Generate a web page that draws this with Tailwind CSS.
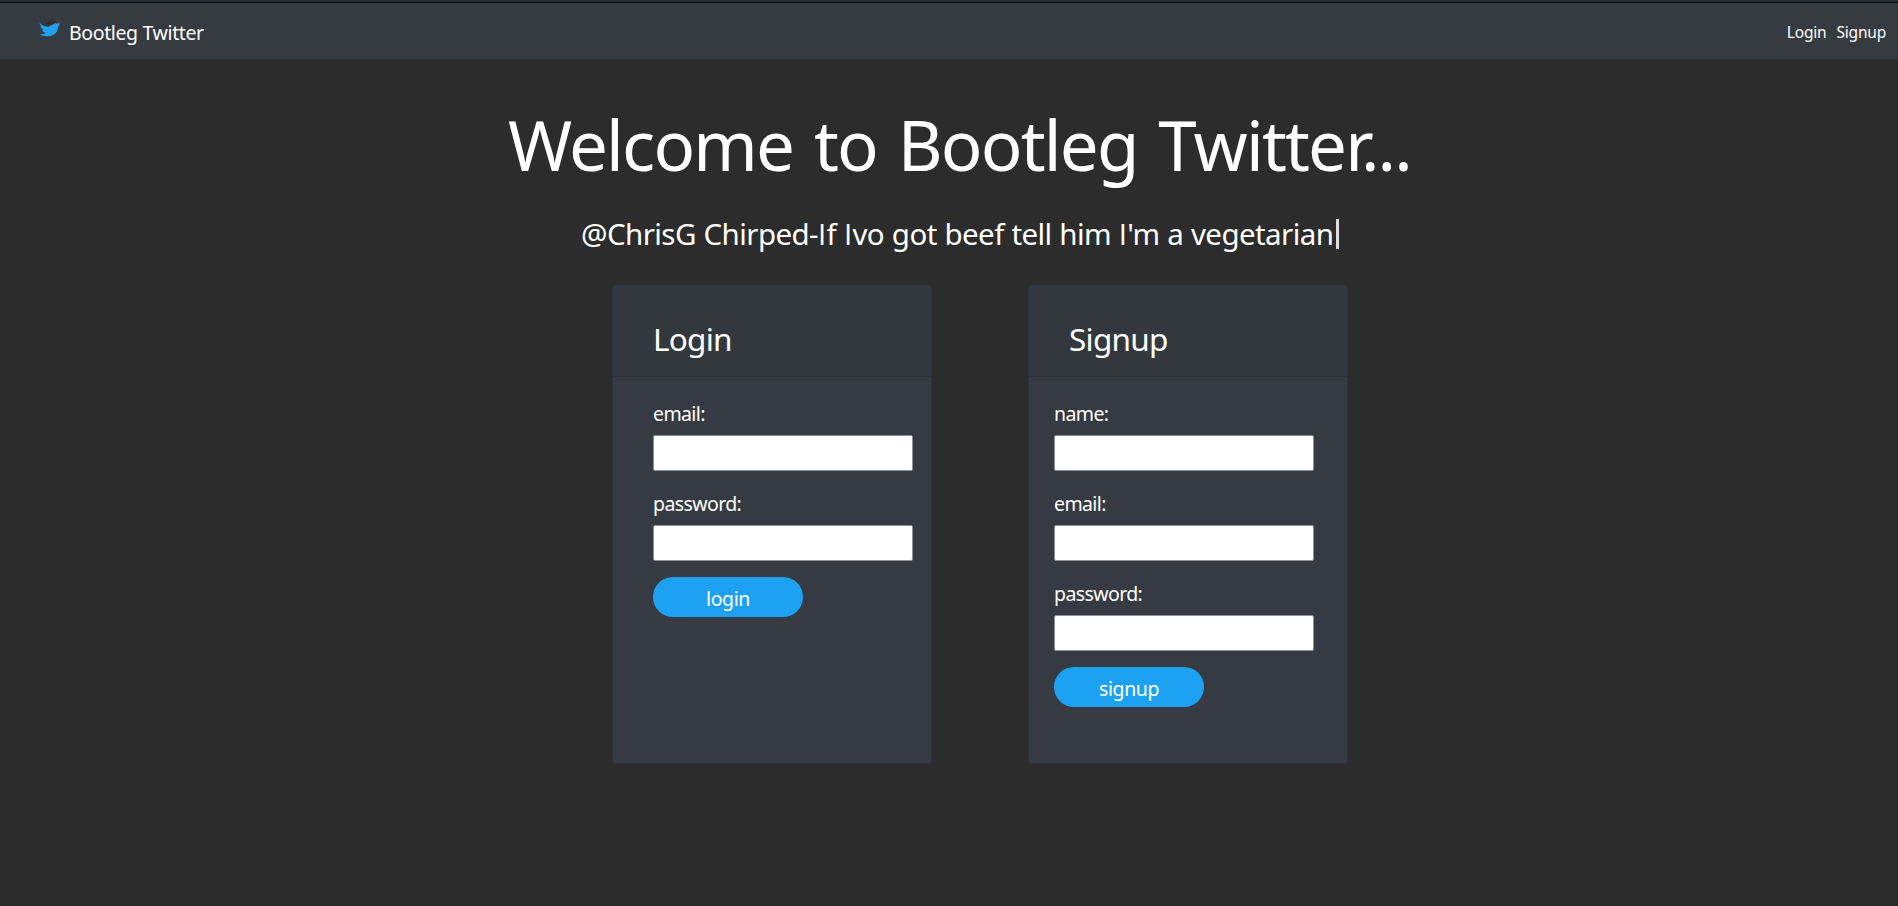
<!DOCTYPE html>
<html lang="en">
<head>
<meta charset="utf-8">
<title>Bootleg Twitter</title>
<script src="https://cdn.jsdelivr.net/npm/@tailwindcss/browser@4"></script>
</head>
<body class="h-screen overflow-hidden bg-[#2c2c2c] text-white font-['Noto_Sans',sans-serif]">
<div class="h-[3px] bg-[#2b2a33] border-b border-[#0c0c0d]"></div>
<nav class="flex h-14 items-center justify-between bg-[#363b42] pl-[39px] pr-3">
  <a class="flex items-start">
    <svg class="mt-[1px] h-5 w-[22px]" viewBox="0 0 22 20">
      <path fill="#1da1f2" d="M.8 5.100C3 8 6.300 8.900 10.300 8.900 10.100 5.800 12 4.300 14.500 4.300c1.400 0 2.400.5 3.100 1.400l3.400-1.300c-.3 1-1 1.800-1.800 2.200l1.800-.3c-.5.8-1 1.300-1.800 1.900C19 14 15.200 18.300 8.200 18.300 5 18.300 2.500 17.500.8 16.400c2.600.2 4.700-.4 6.200-1.600-2-.1-3.500-1.300-4-3.100h1.900C2.900 11.100 1.400 9.600 1.300 7.600l1.900.4C1 6.900.3 6.200.8 5.100Z"/>
      <path fill="#7d2632" d="m8.500 7 2.500 1 6-3-1-1-5.500 2.500Z"/>
      <path fill="#303034" d="M6.400 4.500c.7-.8 1.500-.2 2.100.5C9 2.500 10 .8 11.500 1.300c1-.7 2.100-1.400 2.800-.4l1.300 2c1-.1 2 0 2.100.7.100 1.100-2.300 1.200-4 2.300-1.500 1.100-3 1.200-4.400.7-1.500-.4-2.600-1-2.900-2.100Z"/>
    </svg>
    <span class="ml-[8px] h-7 text-[19.5px] leading-[31px] tracking-[-0.37px]">Bootleg Twitter</span>
  </a>
  <div class="flex gap-[10px] pt-[1px] text-[15.5px] leading-6">
    <a class="tracking-[-0.2px]">Login</a>
    <a class="tracking-[-0.2px]">Signup</a>
  </div>
</nav>
<main>
  <h1 class="mt-[43px] ml-[508px] h-[86px] whitespace-nowrap text-[69px] leading-[84px] tracking-[-1.8px] [word-spacing:4.6px]">Welcome to Bootleg Twitter...</h1>
  <div class="mt-[28px] ml-[581px] flex h-9 items-center whitespace-nowrap">
    <h2 class="text-[29.5px] leading-9 tracking-[-0.57px] [word-spacing:0.6px]">@ChrisG Chirped-<span class="font-['Open_Sans'] tracking-[0.3px]">I</span>f <span class="font-['Open_Sans'] tracking-[0.3px]">I</span>vo got beef tell him <span class="font-['Open_Sans'] tracking-[0.3px]">I</span>'m a vegetarian</h2>
    <span class="ml-[3px] h-[30px] w-[3px] bg-[#dcdcdc]"></span>
  </div>
  <div class="mt-[33px] ml-[612px] flex gap-[96px]">
    <section class="h-[479px] w-[320px] rounded border border-[#30343a] bg-[#363a42]">
      <div class="h-[91px] border-b border-[#2e3237] bg-[#33383e] pt-[33px] pl-[40px]">
        <h3 class="text-[31.5px] leading-[40px] tracking-[-0.75px]">Login</h3>
      </div>
      <form class="flex flex-col items-start pt-[22px] pl-[40px]">
        <label class="text-[19.5px] leading-[30px] tracking-[-0.6px]">email:</label>
        <input class="mt-[6px] h-9 w-[260px] rounded-[2px] border border-[#8f8f9d] bg-white">
        <label class="mt-[18px] text-[19.5px] leading-[30px] tracking-[-0.6px]">password:</label>
        <input class="mt-[6px] h-9 w-[260px] rounded-[2px] border border-[#8f8f9d] bg-white">
        <button class="mt-4 h-10 w-[150px] rounded-full bg-[#1da1f2] pt-[3px] text-[19.5px] tracking-[-0.4px]">login</button>
      </form>
    </section>
    <section class="h-[479px] w-[320px] rounded border border-[#30343a] bg-[#363a42]">
      <div class="h-[91px] border-b border-[#2e3237] bg-[#33383e] pt-[33px] pl-[40px]">
        <h3 class="text-[31.5px] leading-[40px] tracking-[-0.75px]">Signup</h3>
      </div>
      <form class="flex flex-col items-start pt-[22px] pl-[25px]">
        <label class="text-[19.5px] leading-[30px] tracking-[-0.6px]">name:</label>
        <input class="mt-[6px] h-9 w-[260px] rounded-[2px] border border-[#8f8f9d] bg-white">
        <label class="mt-[18px] text-[19.5px] leading-[30px] tracking-[-0.6px]">email:</label>
        <input class="mt-[6px] h-9 w-[260px] rounded-[2px] border border-[#8f8f9d] bg-white">
        <label class="mt-[18px] text-[19.5px] leading-[30px] tracking-[-0.6px]">password:</label>
        <input class="mt-[6px] h-9 w-[260px] rounded-[2px] border border-[#8f8f9d] bg-white">
        <button class="mt-4 h-10 w-[150px] rounded-full bg-[#1da1f2] pt-[3px] text-[19.5px] tracking-[-0.4px]">signup</button>
      </form>
    </section>
  </div>
</main>
</body>
</html>
